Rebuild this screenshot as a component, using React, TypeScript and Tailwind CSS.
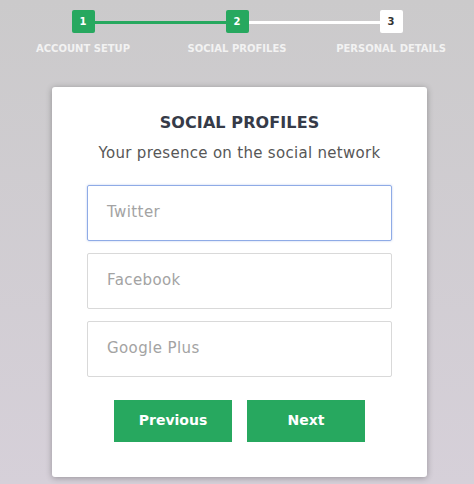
const steps = [
  { n: 1, label: "ACCOUNT SETUP", done: true },
  { n: 2, label: "SOCIAL PROFILES", done: true },
  { n: 3, label: "PERSONAL DETAILS", done: false },
]

const fields = ["Twitter", "Facebook", "Google Plus"]

export default function App() {
  return (
    <div
      className="h-[484px] w-[474px] overflow-hidden bg-gradient-to-b from-[#cbcacb] to-[#d6d0d9] pt-[10px]"
      style={{ fontFamily: '"DejaVu Sans", "Liberation Sans", sans-serif' }}
    >
      <div className="relative grid grid-cols-3 px-[6px]">
        <div className="absolute left-[84px] top-[11px] h-[3px] w-[156px] bg-[#27a85f]" />
        <div className="absolute left-[240px] top-[11px] h-[3px] w-[156px] bg-white" />
        {steps.map((s) => (
          <div key={s.n} className="relative flex flex-col items-center">
            <div
              className={`flex h-[23px] w-[23px] items-center justify-center rounded-[2px] text-[10px] font-bold ${
                s.done ? "bg-[#27a85f] text-white" : "bg-white text-[#333]"
              }`}
            >
              {s.n}
            </div>
            <div className="mt-[8px] text-[10px] font-bold text-[#f2f2f2]">{s.label}</div>
          </div>
        ))}
      </div>

      <div className="ml-[52px] mt-[31px] flex h-[390px] w-[375px] flex-col items-center rounded-[3px] bg-white px-[35px] pt-[24px] shadow-[0_1px_6px_rgba(0,0,0,0.3)]">
        <h2 className="text-[16px] font-bold tracking-[0.1px] text-[#363b48]">SOCIAL PROFILES</h2>
        <p className="mt-[7px] text-[15px] tracking-[0.3px] text-[#575757]">Your presence on the social network</p>
        <div className="mt-[20px] flex w-full flex-col gap-[12px]">
          {fields.map((f, i) => (
            <div
              key={f}
              className={`flex h-[56px] w-full items-center rounded-[2px] border px-[19px] text-[15px] tracking-[0.4px] text-[#a3a3a3] ${
                i === 0 ? "border-[#8fabe6] shadow-[0_0_2px_rgba(100,140,220,0.5)]" : "border-[#d9d9d9]"
              }`}
            >
              {f}
            </div>
          ))}
        </div>
        <div className="mt-[23px] flex gap-[15px]">
          <button className="h-[42px] w-[118px] bg-[#27a85f] text-[14px] font-bold text-white">Previous</button>
          <button className="h-[42px] w-[118px] bg-[#27a85f] text-[14px] font-bold text-white">Next</button>
        </div>
      </div>
    </div>
  )
}
